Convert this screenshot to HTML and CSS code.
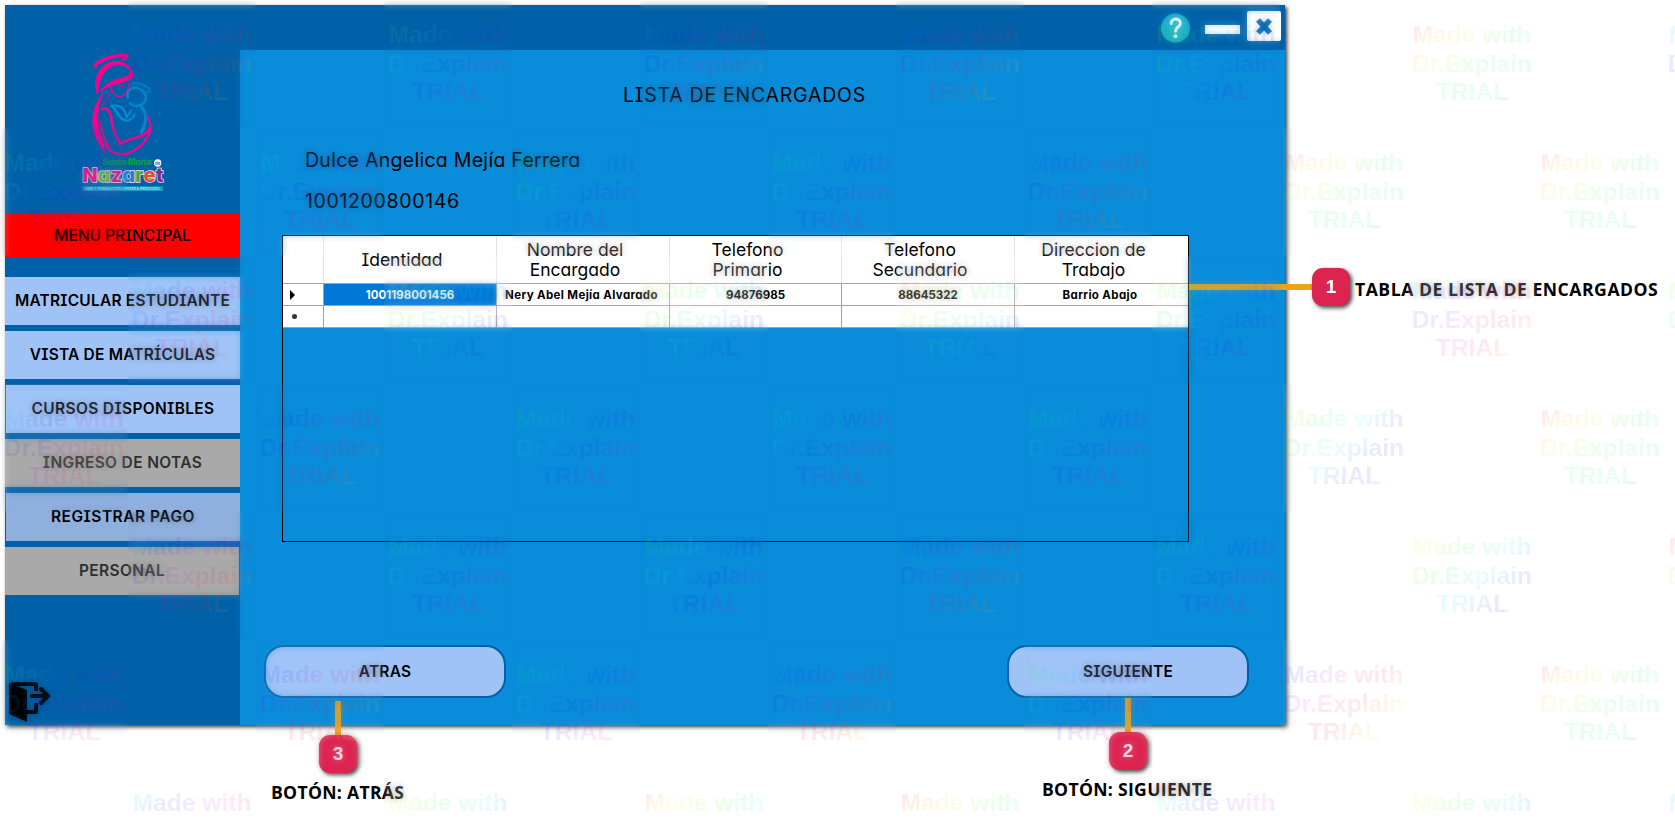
FILE: index.html
```
<!DOCTYPE html>
<html lang="es">
<head>
<meta charset="utf-8">
<title>Lista de encargados</title>
<link rel="stylesheet" href="styles.css">
</head>
<body>
<div class="window">
  <aside class="sidebar">
    <svg class="logo" viewBox="0 0 330 465" fill="none" stroke-linecap="round">
      <g stroke="#f0058c">
        <path stroke-width="7" d="M78 66C64 56 100 38 140 31C172 26 184 36 158 44"/>
        <path stroke-width="5" d="M76 62C90 48 130 34 168 31"/>
        <path fill="#f0058c" stroke-width="3" d="M80 142C66 90 98 50 138 49C172 50 190 74 188 98C150 122 112 116 92 140C100 118 130 104 160 98C176 92 184 84 180 74C170 60 140 54 120 66C98 80 86 106 84 142Z"/>
        <path stroke-width="4" d="M124 126C126 142 136 154 150 155C166 152 174 138 177 118"/>
        <path stroke-width="3" d="M146 121Q156 129 162 124M124 128C122 150 110 165 98 180"/>
        <path fill="#f0058c" stroke-width="3" d="M100 142C74 176 60 216 74 264C82 292 96 306 104 324C104 300 92 280 86 252C80 214 84 176 100 142Z"/>
        <path stroke-width="5" d="M92 232C96 268 106 290 120 306"/>
        <path stroke-width="8" d="M96 192C116 184 122 205 126 232C130 262 140 280 152 296"/>
        <path stroke-width="7" d="M106 296C118 328 158 336 190 318C220 300 244 270 242 240L234 216"/>
        <path stroke-width="8" d="M150 298C180 274 226 284 241 246"/>
      </g>
      <g stroke="#0a8bd6">
        <path stroke-width="4" d="M186 118C190 106 236 122 240 138C238 144 228 142 220 139"/>
        <path stroke-width="7" d="M174 156C168 134 190 122 208 132C230 142 234 166 216 178C202 186 186 184 180 174"/>
        <path stroke-width="7" d="M124 182C142 196 150 232 176 226C186 222 192 216 194 208"/>
        <path stroke-width="6" d="M126 182C154 180 164 192 170 216L184 196"/>
        <path stroke-width="9" d="M214 184C232 208 228 238 214 262"/>
      </g>
      <text class="logo-top" x="97" y="360" textLength="147">Santa María</text>
      <circle cx="263" cy="354" r="11" fill="#fff"/>
      <text class="logo-de" x="255" y="359">de</text>
      <text class="logo-name" x="37" y="410" textLength="243" lengthAdjust="spacingAndGlyphs"><tspan fill="#e6117f">N</tspan><tspan fill="#6cb33f">a</tspan><tspan fill="#e6117f">z</tspan><tspan fill="#1b84cf">a</tspan><tspan fill="#41a83c">r</tspan><tspan fill="#ee4a26">e</tspan><tspan fill="#7b2d8b">t</tspan></text>
      <rect x="38" y="424" width="241" height="14" fill="#1c9bc6"/>
      <text class="logo-band" x="46" y="435" textLength="225" lengthAdjust="spacingAndGlyphs">EARLY STIMULATION CENTER &amp; PRESCHOOL</text>
    </svg>
    <div class="menu-title">MENU PRINCIPAL</div>
    <nav class="menu">
      <a class="item">MATRICULAR ESTUDIANTE</a>
      <a class="item">VISTA DE MATRÍCULAS</a>
      <a class="item inset">CURSOS DISPONIBLES</a>
      <a class="item disabled">INGRESO DE NOTAS</a>
      <a class="item inset hover">REGISTRAR PAGO</a>
      <a class="item disabled last">PERSONAL</a>
    </nav>
    <svg class="exit" viewBox="0 0 42 42">
      <path d="M0 2L18 9V41L0 33Z"/>
      <path fill="none" stroke="#000" stroke-width="4" stroke-linejoin="round" d="M2 3H27V10M27 22V31H18"/>
      <path fill="none" stroke="#000" stroke-width="4" stroke-linecap="round" stroke-linejoin="round" d="M23 15H38M32 8L39 15L32 22"/>
    </svg>
  </aside>
  <section class="content">
    <header class="titlebar">
      <svg class="help" viewBox="0 0 30 30"><circle cx="15" cy="15" r="15" fill="#1fb3cb"/><path d="M10.500 10.500C10.500 4 20.500 4 20 10.500C19.800 14 15 14 15 18.500" fill="none" stroke="#fff" stroke-width="3" stroke-linecap="round"/><circle cx="15" cy="23.500" r="2" fill="#fff"/></svg>
      <span class="minimize"></span>
      <svg class="close" viewBox="0 0 34 30"><rect width="34" height="30" rx="2" fill="#fff"/><path d="M11 9L23 22M23 9L11 22" stroke="#0061a9" stroke-width="5.500"/></svg>
    </header>
    <div class="body">
      <h1 class="title">LISTA DE ENCARGADOS</h1>
      <p class="student name">Dulce Angelica Mejía Ferrera</p>
      <p class="student number">1001200800146</p>
      <div class="table">
        <div class="row head">
          <span></span><span>Identidad</span><span>Nombre del<br>Encargado</span><span>Telefono<br>Primario</span><span>Telefono<br>Secundario</span><span>Direccion de<br>Trabajo</span>
        </div>
        <div class="row">
          <span class="mark"><svg viewBox="0 0 5 10"><path d="M0 0L5 5L0 10Z"/></svg></span><span class="selected">1001198001456</span><span class="words">Nery Abel Mejía Alvarado</span><span>94876985</span><span>88645322</span><span class="words">Barrio Abajo</span>
        </div>
        <div class="row">
          <span class="mark"><i class="dot"></i></span><span></span><span></span><span></span><span></span><span></span>
        </div>
      </div>
      <div class="actions">
        <button class="action">ATRAS</button>
        <button class="action">SIGUIENTE</button>
      </div>
    </div>
  </section>
</div>

<i class="line line-1"></i><b class="badge badge-1">1</b><strong class="note note-1">TABLA DE LISTA DE ENCARGADOS</strong>
<i class="line line-2"></i><b class="badge badge-2">2</b><strong class="note note-2">BOTÓN: SIGUIENTE</strong>
<i class="line line-3"></i><b class="badge badge-3">3</b><strong class="note note-3">BOTÓN: ATRÁS</strong>

<div class="watermark" id="watermark"></div>
<script src="watermark.js"></script>
</body>
</html>
```
FILE: styles.css
```
* { box-sizing: border-box; }
body {
  margin: 0;
  width: 1675px;
  height: 819px;
  position: relative;
  overflow: hidden;
  background: #fff;
  color: #000;
  font-family: Inter, "Open Sans", sans-serif;
  font-feature-settings: "cv11", "cv08";
}
.window {
  display: flex;
  width: 1280px;
  height: 720px;
  margin: 5px 0 0 5px;
  box-shadow: 2px 2px 4px #333;
  background: #098cda;
}
.sidebar {
  display: flex;
  flex-direction: column;
  width: 235px;
  background: #0061a9;
}
.logo { display: block; width: 110px; height: 155px; margin: 40px 0 14px 65px; }
.logo text { font-family: Inter, sans-serif; }
.logo-top { fill: #0d9b49; font-size: 25px; font-weight: 800; }
.logo-de { fill: #0a72c4; font-size: 13px; font-weight: 700; }
.logo-name { font-size: 58px; font-weight: 800; stroke: #f4e9f2; stroke-width: 4px; paint-order: stroke; }
.logo-band { fill: #a8e6f2; font-size: 10px; font-weight: 600; }
.menu-title, .item { display: flex; align-items: center; justify-content: center; white-space: nowrap; }
.menu-title { height: 44px; padding-bottom: 1px; background: #f00; font-size: 15.500px; font-weight: 500; }
.menu { display: flex; flex-direction: column; gap: 6px; margin-top: 19px; }
.item { height: 48px; padding-bottom: 1px; background: #a0c3f7; font-size: 15.500px; font-weight: 600; letter-spacing: .2px; }
.item.inset { margin-left: 1px; letter-spacing: .35px; }
.item.disabled { background: #a9a9a9; color: #303030; letter-spacing: .35px; }
.item.hover { background: #8fb0de; letter-spacing: .5px; }
.item.last { margin-right: 1px; }
.exit { width: 42px; height: 42px; margin: 86px 0 0 4px; }
.content { flex: 1; display: flex; flex-direction: column; }
.titlebar { display: flex; height: 45px; padding: 6px 4px 0 0; justify-content: flex-end; background: #0061a9; }
.help { width: 29px; height: 30px; margin: 2px 15px 0 0; }
.minimize { width: 35px; height: 9px; margin: 14px 7px 0 0; background: #fff; }
.close { width: 34px; height: 30px; }
.body { display: flex; flex-direction: column; flex: 1; }
.title { margin: 33px 0 0; height: 24px; padding-right: 36px; text-align: center; font-size: 19.500px; line-height: 24px; font-weight: 400; letter-spacing: .75px; }
.student { margin: 0 0 0 65px; font-size: 19.500px; line-height: 24px; height: 24px; }
.student.name { margin-top: 41px; letter-spacing: .28px; }
.student.number { margin-top: 17px; letter-spacing: .65px; }
.table { width: 907px; height: 307px; margin: 22px 0 0 42px; border: 1px solid #000; }
.row { display: grid; grid-template-columns: 41px 173px 173px 172px 173px 173px; height: 22px; background: #fff; font-size: 11.500px; font-weight: 700; }
.row > span { display: flex; align-items: center; justify-content: center; text-align: center; border-right: 1px solid #a0a0a0; border-bottom: 1px solid #a0a0a0; white-space: nowrap; }
.row > span:last-child { border-right: 0; }
.row.head { height: 48px; font-size: 17.500px; font-weight: 400; line-height: 20px; }
.row.head > span { border-right-color: #e2e2e2; padding-right: 16px; }
.row .selected { background: #0078d7; color: #fff; }
.row .words { letter-spacing: .36px; padding-right: 3px; }
.row .mark { justify-content: flex-start; padding-left: 7px; }
.mark svg { width: 5px; height: 10px; }
.dot { width: 5px; height: 5px; margin-left: 2px; border-radius: 50%; background: #333; }
.actions { display: flex; justify-content: space-between; margin: 103px 36px 0 24px; }
.action { width: 242px; height: 53px; padding: 0; border: 2px solid #0061a9; border-radius: 20px; background: #a0c3f7; color: #000; font: inherit; font-size: 15.500px; font-weight: 600; letter-spacing: .2px; }

.line { position: absolute; background: #eba31a; }
.line-1 { left: 1189px; top: 284px; width: 124px; height: 6px; }
.line-2 { left: 1125px; top: 698px; width: 6px; height: 36px; }
.line-3 { left: 335px; top: 701px; width: 6px; height: 36px; }
.badge {
  position: absolute; display: flex; align-items: center; justify-content: center;
  width: 38px; height: 38px; border-radius: 11px; background: #dc2450; color: #fff;
  font: bold 19px "Liberation Sans", sans-serif; box-shadow: 2px 2px 4px #444;
}
.badge-1 { left: 1312px; top: 268px; }
.badge-2 { left: 1109px; top: 732px; }
.badge-3 { left: 319px; top: 735px; }
.note { position: absolute; white-space: nowrap; font: bold 17.600px/24px "Open Sans", sans-serif; letter-spacing: .52px; }
.note-1 { left: 1355px; top: 277px; }
.note-2 { left: 1042px; top: 777px; letter-spacing: .3px; }
.note-3 { left: 271px; top: 780px; letter-spacing: .3px; }

.watermark { position: absolute; inset: 0; overflow: hidden; pointer-events: none; }
.haze { position: absolute; width: 128px; height: 128px; backdrop-filter: blur(3px); opacity: .3; }
.stamp {
  position: absolute; width: 128px; height: 128px; padding-top: 21px; text-align: center;
  white-space: pre; font: bold 24.600px/28.500px "Liberation Sans", sans-serif;
  background-clip: text; -webkit-background-clip: text; color: transparent;
}
```
FILE: watermark.js
```
// Starting hue of each stamp, row by row; stamps alternate like a checkerboard.
const hues = [
  [210, 130, 200, 220, 90, 5, 190],
  [140, 160, 100, 130, 210, 5, 5],
  [180, 60, 60, 30, 90, 190, 100],
  [180, 200, 120, 150, 130, 80, 5],
  [200, 130, 110, 210, 130, 55, 5],
  [150, 220, 130, 210, 130, 225, 5],
  [190, 60, 20, 0, 170, 60, 190]
];
const layer = document.getElementById("watermark");
hues.forEach((row, r) => row.forEach((hue, c) => {
  const left = c * 256 + (r % 2 ? 0 : 128);
  const pos = `left:${left}px;top:${r * 128}px;`;
  const stops = [];
  for (let i = 0; i <= 11; i++) stops.push(`hsla(${hue - 50 + i * 30},100%,50%,.09)`);
  layer.insertAdjacentHTML("beforeend",
    `<div class="haze" style="${pos}"></div>` +
    `<div class="stamp" style="${pos}background-image:linear-gradient(135deg,${stops.join(",")})">Made with\nDr.Explain\nTRIAL</div>`);
}));
```
